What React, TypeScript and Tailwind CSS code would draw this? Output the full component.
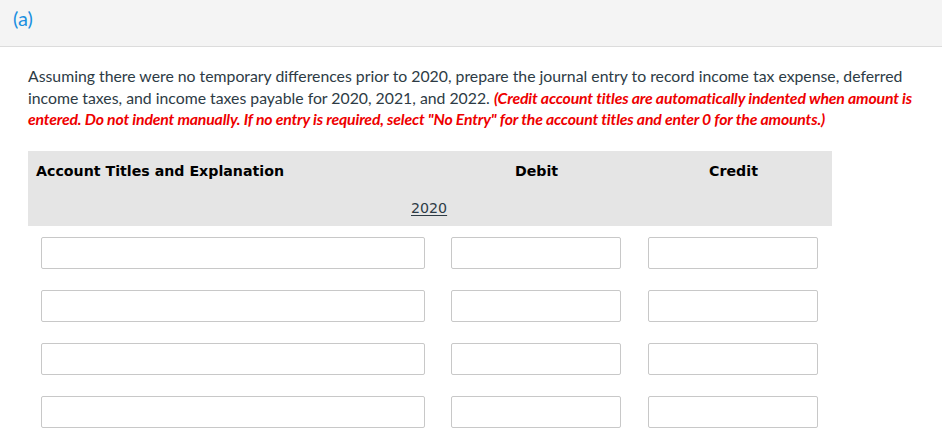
import React from "react";

const rows = [0, 1, 2, 3];

export default function App() {
  return (
    <div className="w-[942px] h-[435px] overflow-hidden bg-white" style={{ fontFamily: "Lato, 'Noto Sans', sans-serif" }}>
      <div className="h-[47px] bg-[#f4f4f4] border-b border-[#dcdcdc] pl-[13px] pt-[3px]">
        <span className="text-[20px] text-[#1a8fe0]">(a)</span>
      </div>
      <div className="pl-[28px] pr-[20px] pt-[18px] text-[15.8px] leading-[21.5px] text-[#2d3b45]">
        Assuming there were no temporary differences prior to 2020, prepare the journal entry to record income tax expense, deferred income taxes, and income taxes payable for 2020, 2021, and 2022.{" "}
        <span className="font-bold italic text-[#ee0000] tracking-[-0.17px]">
          (Credit account titles are automatically indented when amount is entered. Do not indent manually. If no entry is required, select "No Entry" for the account titles and enter 0 for the amounts.)
        </span>
      </div>
      <div className="ml-[28px] mt-[21px] w-[804px]" style={{ fontFamily: "'DejaVu Sans', Verdana, sans-serif" }}>
        <div className="bg-[#e5e5e5] h-[75px] flex flex-col">
          <div className="flex h-[43px] items-center text-[14.2px] font-bold text-black">
            <div className="w-[410px] pl-[8px]">Account Titles and Explanation</div>
            <div className="w-[197px] text-center">Debit</div>
            <div className="w-[197px] text-center">Credit</div>
          </div>
          <div className="flex h-[30px] items-center text-[14.2px] text-[#2d3b45]">
            <span className="ml-[383px] underline underline-offset-2">2020</span>
          </div>
        </div>
        <div className="flex flex-col gap-[21px] pt-[11px]">
          {rows.map((r) => (
            <div key={r} className="flex">
              <div className="w-[410px] px-[13px]">
                <div className="h-[32px] border border-[#c8c8c8] rounded-[2px] bg-white" />
              </div>
              <div className="w-[197px] pl-[13px] pr-[14px]">
                <div className="h-[32px] border border-[#c8c8c8] rounded-[2px] bg-white" />
              </div>
              <div className="w-[197px] pl-[13px] pr-[14px]">
                <div className="h-[32px] border border-[#c8c8c8] rounded-[2px] bg-white" />
              </div>
            </div>
          ))}
        </div>
      </div>
    </div>
  );
}
